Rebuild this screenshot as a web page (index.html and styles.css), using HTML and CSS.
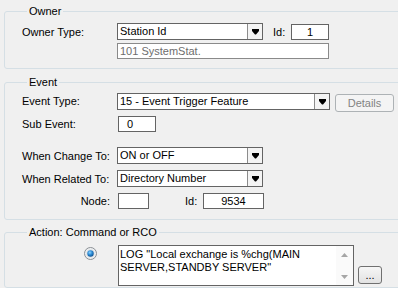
FILE: index.html
```html
<!DOCTYPE html>
<html lang="en">
<head>
  <meta charset="UTF-8" />
  <title>Event Trigger</title>
  <link rel="stylesheet" href="styles.css">
</head>
<body>
<div class="window">

  <fieldset class="group owner">
    <legend>Owner</legend>
    <div class="row first">
      <span class="label">Owner Type:</span>
      <div class="combo w146">
        <span class="combo-text">Station Id</span>
        <span class="combo-btn"><svg width="7" height="6" viewBox="0 0 7 6"><polygon points="0,0 7,0 7,2 4,5.5 3,5.5 0,2" fill="#000"/></svg></span>
      </div>
      <span class="id-label">Id:</span>
      <div class="box w38 center">1</div>
    </div>
    <div class="row second">
      <span class="label"></span>
      <div class="box disabled w212">101 SystemStat.</div>
    </div>
  </fieldset>

  <fieldset class="group event">
    <legend>Event</legend>
    <div class="row first">
      <span class="label">Event Type:</span>
      <div class="combo w213">
        <span class="combo-text">15 - Event Trigger Feature</span>
        <span class="combo-btn"><svg width="7" height="6" viewBox="0 0 7 6"><polygon points="0,0 7,0 7,2 4,5.5 3,5.5 0,2" fill="#000"/></svg></span>
      </div>
      <button class="btn details" disabled>Details</button>
    </div>
    <div class="row sub">
      <span class="label">Sub Event:</span>
      <div class="box w38 pad8 nudge">0</div>
    </div>
    <div class="row change">
      <span class="label">When Change To:</span>
      <div class="combo w146">
        <span class="combo-text">ON or OFF</span>
        <span class="combo-btn"><svg width="7" height="6" viewBox="0 0 7 6"><polygon points="0,0 7,0 7,2 4,5.5 3,5.5 0,2" fill="#000"/></svg></span>
      </div>
    </div>
    <div class="row related">
      <span class="label">When Related To:</span>
      <div class="combo w146">
        <span class="combo-text">Directory Number</span>
        <span class="combo-btn"><svg width="7" height="6" viewBox="0 0 7 6"><polygon points="0,0 7,0 7,2 4,5.5 3,5.5 0,2" fill="#000"/></svg></span>
      </div>
    </div>
    <div class="row node">
      <span class="label right">Node:</span>
      <div class="box w31 nudge"></div>
      <span class="id-label node-id">Id:</span>
      <div class="box w61 center">9534</div>
    </div>
  </fieldset>

  <fieldset class="group action">
    <legend>Action: Command or RCO</legend>
    <div class="row memo-row">
      <span class="label radio-cell">
        <svg width="13" height="13" viewBox="0 0 13 13">
          <defs>
            <radialGradient id="dot" cx="0.4" cy="0.35" r="0.7">
              <stop offset="0" stop-color="#8fd3ff"/>
              <stop offset="0.5" stop-color="#2a8ad4"/>
              <stop offset="1" stop-color="#0d4d8c"/>
            </radialGradient>
          </defs>
          <circle cx="6.5" cy="6.5" r="6" fill="#eef0f2" stroke="#8a8f94"/>
          <circle cx="6.5" cy="6.5" r="4.3" fill="#dfe3e7"/>
          <circle cx="6.5" cy="6.5" r="3.2" fill="url(#dot)"/>
        </svg>
      </span>
      <div class="memo nudge">
        <div class="memo-text">LOG "Local exchange is %chg(MAIN SERVER,STANDBY SERVER"</div>
        <div class="scroll">
          <svg width="7" height="4" viewBox="0 0 7 4"><polygon points="3.5,0 7,4 0,4" fill="#a6a6a6"/></svg>
          <svg width="7" height="4" viewBox="0 0 7 4"><polygon points="0,0 7,0 3.5,4" fill="#a6a6a6"/></svg>
        </div>
      </div>
      <button class="btn more">...</button>
    </div>
  </fieldset>

</div>
</body>
</html>
```

FILE: styles.css
```css
body {
  margin: 0;
  background: #f0f0f0;
  font-family: "Liberation Sans", Arial, sans-serif;
  font-size: 11px;
  color: #000;
}
.window {
  width: 398px;
  height: 288px;
  overflow: hidden;
}
.group {
  border: 1px solid #d5dfe5;
  border-radius: 3px;
  margin: 0 -6px 0 4px;
  padding: 0 0 0 17px;
  min-width: 0;
}
.group legend {
  margin-left: 5px;
  padding: 0 2px;
  line-height: 13px;
  height: 13px;
}
.owner {
  margin-top: 5px;
  padding-bottom: 9px;
}
.event {
  margin-top: 7px;
  padding-bottom: 10px;
}
.action {
  margin-top: 6px;
  height: 60px;
}
.row {
  display: flex;
  align-items: center;
}
.label {
  width: 95px;
  flex: none;
  white-space: nowrap;
}
.label.right {
  text-align: right;
  padding-right: 7px;
  box-sizing: border-box;
}
.owner .first { margin-top: 5px; height: 17px; }
.owner .second { margin-top: 3px; height: 16px; }
.event .first { margin-top: 4px; height: 18px; align-items: flex-start; }
.event .first .label { line-height: 17px; }
.event .sub { margin-top: 5px; height: 16px; }
.event .change { margin-top: 15px; height: 17px; }
.event .related { margin-top: 6px; height: 17px; }
.event .node { margin-top: 6px; height: 16px; }

.combo {
  display: flex;
  height: 17px;
  box-sizing: border-box;
  border: 1px solid #646464;
  background: #fff;
}
.combo-text {
  flex: 1;
  padding-left: 2px;
  line-height: 15px;
  white-space: nowrap;
  overflow: hidden;
}
.combo-btn {
  width: 14px;
  border-left: 1px solid #8c8c8c;
  background: #f4f4f4;
  display: flex;
  align-items: center;
  justify-content: center;
}
.box {
  height: 16px;
  box-sizing: border-box;
  border: 1px solid #646464;
  background: #fff;
  line-height: 14px;
  padding: 0 2px;
  white-space: nowrap;
}
.box.disabled {
  border-color: #8a8a8a;
  color: #6d6d6d;
}
.center { text-align: center; }
.pad8 { padding-left: 8px; }
.nudge { margin-left: 1px; }
.w31 { width: 31px; }
.w38 { width: 38px; }
.w61 { width: 61px; }
.w146 { width: 146px; }
.w212 { width: 212px; }
.w213 { width: 213px; }
.id-label {
  width: 18px;
  margin-left: 10px;
}
.node-id { margin-left: 36px; }

.btn {
  font-family: inherit;
  font-size: 11px;
  box-sizing: border-box;
  height: 18px;
  padding: 0;
  border-radius: 3px;
  border: 1px solid #707070;
  background: linear-gradient(#f6f6f6, #e2e2e2);
  color: #000;
}
.details {
  width: 59px;
  margin: 1px 0 0 5px;
  border-color: #adb2b5;
  background: #f4f4f4;
  color: #838383;
}
.more {
  width: 24px;
  margin: 0 0 2px 4px;
  align-self: flex-end;
  line-height: 12px;
}

.memo-row {
  margin-top: 6px;
  align-items: flex-start;
  height: 41px;
}
.radio-cell {
  padding: 2px 0 0 62px;
  box-sizing: border-box;
  height: 15px;
}
.memo {
  display: flex;
  width: 236px;
  height: 41px;
  box-sizing: border-box;
  border: 1px solid #646464;
  background: #fff;
}
.memo-text {
  flex: 1;
  padding: 2px 0 0 1px;
  line-height: 13px;
}
.scroll {
  width: 17px;
  background: #fafafa;
  display: flex;
  flex-direction: column;
  align-items: center;
  justify-content: space-between;
  padding: 7px 0 6px;
  box-sizing: border-box;
}
```
